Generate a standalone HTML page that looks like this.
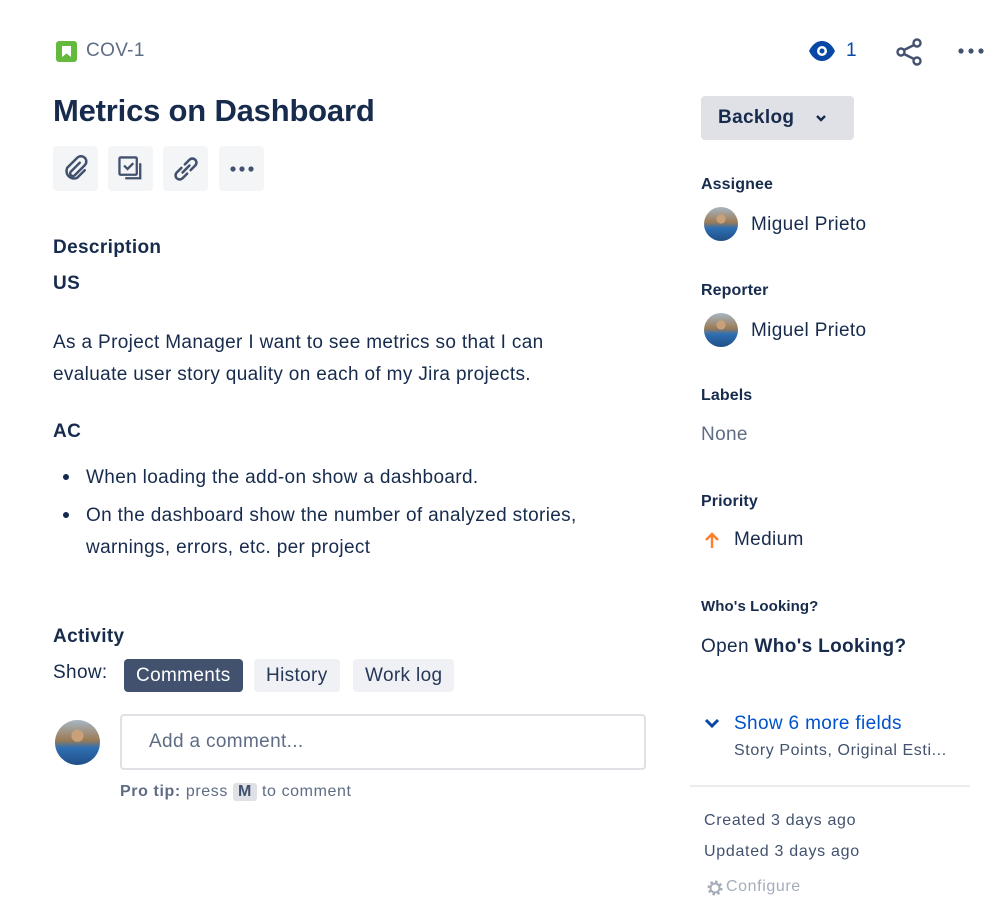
<!DOCTYPE html>
<html><head><meta charset="utf-8"><style>
*{margin:0;padding:0;box-sizing:border-box}
body{width:1000px;height:906px;background:#fff;font-family:"Liberation Sans",sans-serif;color:#172b4d;position:relative;overflow:hidden;letter-spacing:0.35px}
.a{position:absolute;white-space:nowrap}
.btn{position:absolute;width:45px;height:45px;background:#f4f5f7;border-radius:4px;display:flex;align-items:center;justify-content:center}
.lbl{font-size:16px;font-weight:bold;color:#172b4d;letter-spacing:0.1px}
.txt{font-size:19px}
.av{position:absolute;border-radius:50%;background:radial-gradient(circle at 50% 35%,#c9a07a 0 16%,transparent 17%),linear-gradient(180deg,#a7b6c4 0%,#9b7b55 45%,#2f6fb3 62%,#1f4f86 100%)}
.tab{position:absolute;top:659px;height:33px;border-radius:4px;font-size:19px;line-height:33px;padding:0 12px;background:#f0f1f4;color:#253858}
</style></head><body>
<svg class="a" style="left:56px;top:41px" width="21" height="21" viewBox="0 0 21 21"><rect width="21" height="21" rx="3" fill="#63ba3c"/><path d="M6 5h9v11l-4.5-3.5L6 16z" fill="#fff"/></svg>
<div class="a" style="left:86px;top:40px;font-size:19px;color:#5e6c84">COV-1</div>
<div class="a" style="left:53px;top:93px;font-size:31px;font-weight:bold;color:#172b4d;letter-spacing:-0.2px">Metrics on Dashboard</div>
<div class="btn" style="left:53px;top:146px"><svg width="30" height="30" viewBox="0 0 24 24" fill="none" stroke="#42526e" stroke-width="2" stroke-linecap="round"><path d="M15 7l-7 7a2 2 0 0 0 3 3l8-8a4 4 0 0 0-6-6l-8 8a6 6 0 0 0 8 8l6-6"/></svg></div>
<div class="btn" style="left:108px;top:146px"><svg width="30" height="30" viewBox="0 0 26 26" fill="none" stroke="#42526e" stroke-width="2"><rect x="3" y="3" width="15" height="15" rx="1"/><path d="M7 10l3 3 5-5"/><path d="M21 8v13H8"/></svg></div>
<div class="btn" style="left:163px;top:146px"><svg width="30" height="30" viewBox="0 0 26 26" fill="none" stroke="#42526e" stroke-width="2.2" stroke-linecap="round"><path d="M10 16l6-6"/><path d="M9 12l-4 4a3.5 3.5 0 0 0 5 5l4-4"/><path d="M17 14l4-4a3.5 3.5 0 0 0-5-5l-4 4"/></svg></div>
<div class="btn" style="left:219px;top:146px"><svg width="26" height="8"><circle cx="4" cy="4" r="2.6" fill="#42526e"/><circle cx="13" cy="4" r="2.6" fill="#42526e"/><circle cx="22" cy="4" r="2.6" fill="#42526e"/></svg></div>

<div class="a" style="left:53px;top:237px;font-size:19px;font-weight:bold">Description</div>
<div class="a" style="left:53px;top:273px;font-size:19px;font-weight:bold">US</div>
<div class="a txt" style="left:53px;top:327px;line-height:32px">As a Project Manager I want to see metrics so that I can<br>evaluate user story quality on each of my Jira projects.</div>
<div class="a" style="left:53px;top:421px;font-size:19px;font-weight:bold">AC</div>
<div class="a" style="left:63px;top:474px;width:6px;height:6px;border-radius:50%;background:#172b4d"></div>
<div class="a txt" style="left:86px;top:467px">When loading the add-on show a dashboard.</div>
<div class="a" style="left:63px;top:512px;width:6px;height:6px;border-radius:50%;background:#172b4d"></div>
<div class="a txt" style="left:86px;top:500px;line-height:32px">On the dashboard show the number of analyzed stories,<br>warnings, errors, etc. per project</div>

<div class="a" style="left:53px;top:626px;font-size:19px;font-weight:bold">Activity</div>
<div class="a txt" style="left:53px;top:662px">Show:</div>
<div class="tab" style="left:124px;background:#42526e;color:#fff">Comments</div>
<div class="tab" style="left:254px">History</div>
<div class="tab" style="left:353px">Work log</div>
<div class="av" style="left:55px;top:720px;width:45px;height:45px"></div>
<div class="a" style="left:120px;top:714px;width:526px;height:56px;border:2px solid #dfe1e6;border-radius:4px"></div>
<div class="a" style="left:149px;top:731px;font-size:19px;color:#5e6c84">Add a comment...</div>
<div class="a" style="left:120px;top:783px;font-size:16px;color:#5e6c84;letter-spacing:0.6px"><b>Pro tip:</b> press <span style="display:inline-block;background:#dfe1e6;border-radius:3px;padding:0 5px;font-weight:bold;color:#42526e">M</span> to comment</div>

<svg class="a" style="left:808px;top:40px" width="28" height="22" viewBox="0 0 28 22"><path d="M1 11C5 3 10 1 14 1s9 2 13 10c-4 8-9 10-13 10S5 19 1 11z" fill="#0747a6"/><circle cx="14" cy="11" r="5" fill="#fff"/><circle cx="14" cy="11" r="2.5" fill="#0747a6"/></svg>
<div class="a" style="left:846px;top:40px;font-size:19px;color:#0747a6">1</div>
<svg class="a" style="left:895px;top:38px" width="30" height="28" viewBox="0 0 30 28" fill="none" stroke="#42526e" stroke-width="2.4"><circle cx="22" cy="5" r="3.5"/><circle cx="6" cy="14" r="3.5"/><circle cx="22" cy="23" r="3.5"/><path d="M9 12l10-5M9 16l10 5"/></svg>
<svg class="a" style="left:957px;top:47px" width="28" height="8"><circle cx="4" cy="4" r="2.6" fill="#42526e"/><circle cx="14" cy="4" r="2.6" fill="#42526e"/><circle cx="24" cy="4" r="2.6" fill="#42526e"/></svg>

<div class="a" style="left:701px;top:96px;width:153px;height:44px;background:#dfe1e6;border-radius:4px"></div>
<div class="a" style="left:718px;top:107px;font-size:19px;font-weight:bold;color:#172b4d">Backlog</div>
<svg class="a" style="left:815px;top:114px" width="12" height="9" viewBox="0 0 12 9"><path d="M2 2l4 4 4-4" fill="none" stroke="#172b4d" stroke-width="2.4"/></svg>

<div class="a lbl" style="left:701px;top:176px">Assignee</div>
<div class="av" style="left:704px;top:207px;width:34px;height:34px"></div>
<div class="a txt" style="left:751px;top:214px">Miguel Prieto</div>
<div class="a lbl" style="left:701px;top:282px">Reporter</div>
<div class="av" style="left:704px;top:313px;width:34px;height:34px"></div>
<div class="a txt" style="left:751px;top:320px">Miguel Prieto</div>
<div class="a lbl" style="left:701px;top:387px">Labels</div>
<div class="a txt" style="left:701px;top:424px;color:#5e6c84">None</div>
<div class="a lbl" style="left:701px;top:493px">Priority</div>
<svg class="a" style="left:704px;top:531px" width="16" height="18" viewBox="0 0 16 18"><path d="M8 17V3M2 9l6-6 6 6" fill="none" stroke="#ff7f2a" stroke-width="2.4"/></svg>
<div class="a txt" style="left:734px;top:529px">Medium</div>
<div class="a lbl" style="left:701px;top:598px;font-size:15px">Who's Looking?</div>
<div class="a txt" style="left:701px;top:636px">Open <b>Who's Looking?</b></div>
<svg class="a" style="left:704px;top:717px" width="16" height="12" viewBox="0 0 16 12"><path d="M2 3l6 6 6-6" fill="none" stroke="#0747a6" stroke-width="3"/></svg>
<div class="a txt" style="left:734px;top:713px;color:#0052cc">Show 6 more fields</div>
<div class="a" style="left:734px;top:742px;font-size:16px;color:#42526e;letter-spacing:0.6px">Story Points, Original Esti...</div>
<div class="a" style="left:690px;top:785px;width:280px;height:2px;background:#ebecf0"></div>
<div class="a" style="left:704px;top:812px;font-size:16px;color:#42526e;letter-spacing:0.7px">Created 3 days ago</div>
<div class="a" style="left:704px;top:843px;font-size:16px;color:#42526e;letter-spacing:0.7px">Updated 3 days ago</div>
<svg class="a" style="left:706px;top:879px" width="18" height="18" viewBox="0 0 18 18"><circle cx="9" cy="9" r="6" fill="none" stroke="#a5adba" stroke-width="3" stroke-dasharray="2.4 2.3"/><circle cx="9" cy="9" r="4.5" fill="none" stroke="#a5adba" stroke-width="2"/></svg>
<div class="a" style="left:726px;top:878px;font-size:16px;color:#a5adba;letter-spacing:0.6px">Configure</div>
</body></html>
